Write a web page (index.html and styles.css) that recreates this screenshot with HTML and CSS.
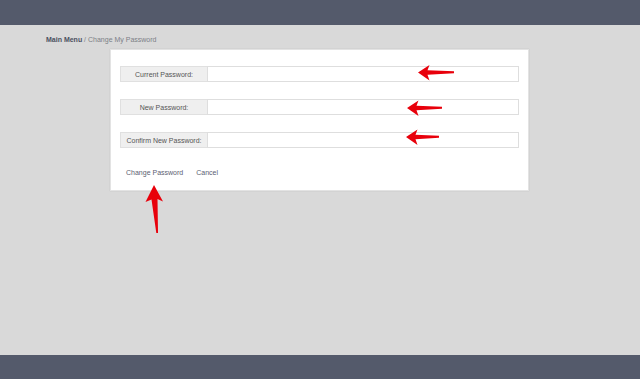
FILE: index.html
```html
<!DOCTYPE html>
<html lang="en">

<head>
    <meta charset="UTF-8">
    <meta name="viewport" content="width=device-width, initial-scale=1.0">
    <title>Change My Password</title>
    <link rel="stylesheet" href="styles.css">
</head>

<body>
    <div id="page">
        <div class="top-bar"></div>
        <div id="main">
            <p class="crumbs"><b>Main Menu</b> / Change My Password</p>
            <div class="card">
                <div class="field-row">
                    <label class="field-label">Current Password:</label>
                    <input class="field-input" type="password">
                </div>
                <div class="field-row">
                    <label class="field-label">New Password:</label>
                    <input class="field-input" type="password">
                </div>
                <div class="field-row">
                    <label class="field-label">Confirm New Password:</label>
                    <input class="field-input" type="password">
                </div>
                <div class="actions">
                    <a class="link" href="#">Change Password</a>
                    <a class="link" href="#">Cancel</a>
                </div>
            </div>
        </div>
        <div class="bottom-bar"></div>
    </div>

    <!-- annotation arrows -->
    <svg class="marks" width="640" height="379" viewBox="0 0 640 379">
        <path d="M418 72.5 L429.5 65 L427.5 70.3 L454 71.3 L454 73.3 L427.5 74.8 L429.5 80.5 Z" />
        <path d="M407 108 L418.5 100.5 L416.5 105.8 L442 106.8 L442 108.8 L416.5 110.3 L418.5 116 Z" />
        <path d="M406 137 L417.5 129.5 L415.5 134.8 L439 135.8 L439 137.8 L415.5 139.3 L417.5 145 Z" />
        <path d="M154 185 L163 201.5 L157.5 199 L158 233 L156.3 233 L151.5 199.5 L145.5 202 Z" />
    </svg>
</body>

</html>
```

FILE: styles.css
```css
* {
    margin: 0;
    padding: 0;
    box-sizing: border-box;
}

body {
    font-family: "Liberation Sans", Arial, sans-serif;
    font-size: 7px;
    background-color: #d9d9d9;
}

#page {
    display: flex;
    flex-direction: column;
    height: 379px;
}

.top-bar {
    height: 25px;
    background-color: #545a6b;
}

.bottom-bar {
    height: 24px;
    background-color: #545a6b;
}

#main {
    flex: 1;
    padding: 11px 0 0 46px;
}

.crumbs {
    color: #7c7f87;
    line-height: 8px;
}

.crumbs b {
    color: #4b5060;
}

.card {
    width: 419px;
    height: 142px;
    margin: 5px 0 0 64px;
    padding: 16px 9px 0 9px;
    background-color: #fff;
    border: 1px solid #e3e3e3;
    box-shadow: 0 0 1px rgba(0, 0, 0, 0.15);
}

.field-row {
    display: flex;
    height: 16px;
    margin-bottom: 17px;
}

.field-label {
    width: 87px;
    display: flex;
    align-items: center;
    justify-content: center;
    background-color: #efefef;
    border: 1px solid #e0e0e0;
    border-right: 0;
    color: #555;
}

.field-input {
    flex: 1;
    border: 1px solid #dedede;
    outline: none;
    background-color: #fff;
}

.actions {
    display: flex;
    gap: 13px;
    padding: 4px 0 0 6px;
}

.link {
    color: #5b6072;
    text-decoration: none;
}

/* annotation overlay */
.marks {
    position: absolute;
    left: 0;
    top: 0;
}

.marks path {
    fill: #e8000b;
}
```
